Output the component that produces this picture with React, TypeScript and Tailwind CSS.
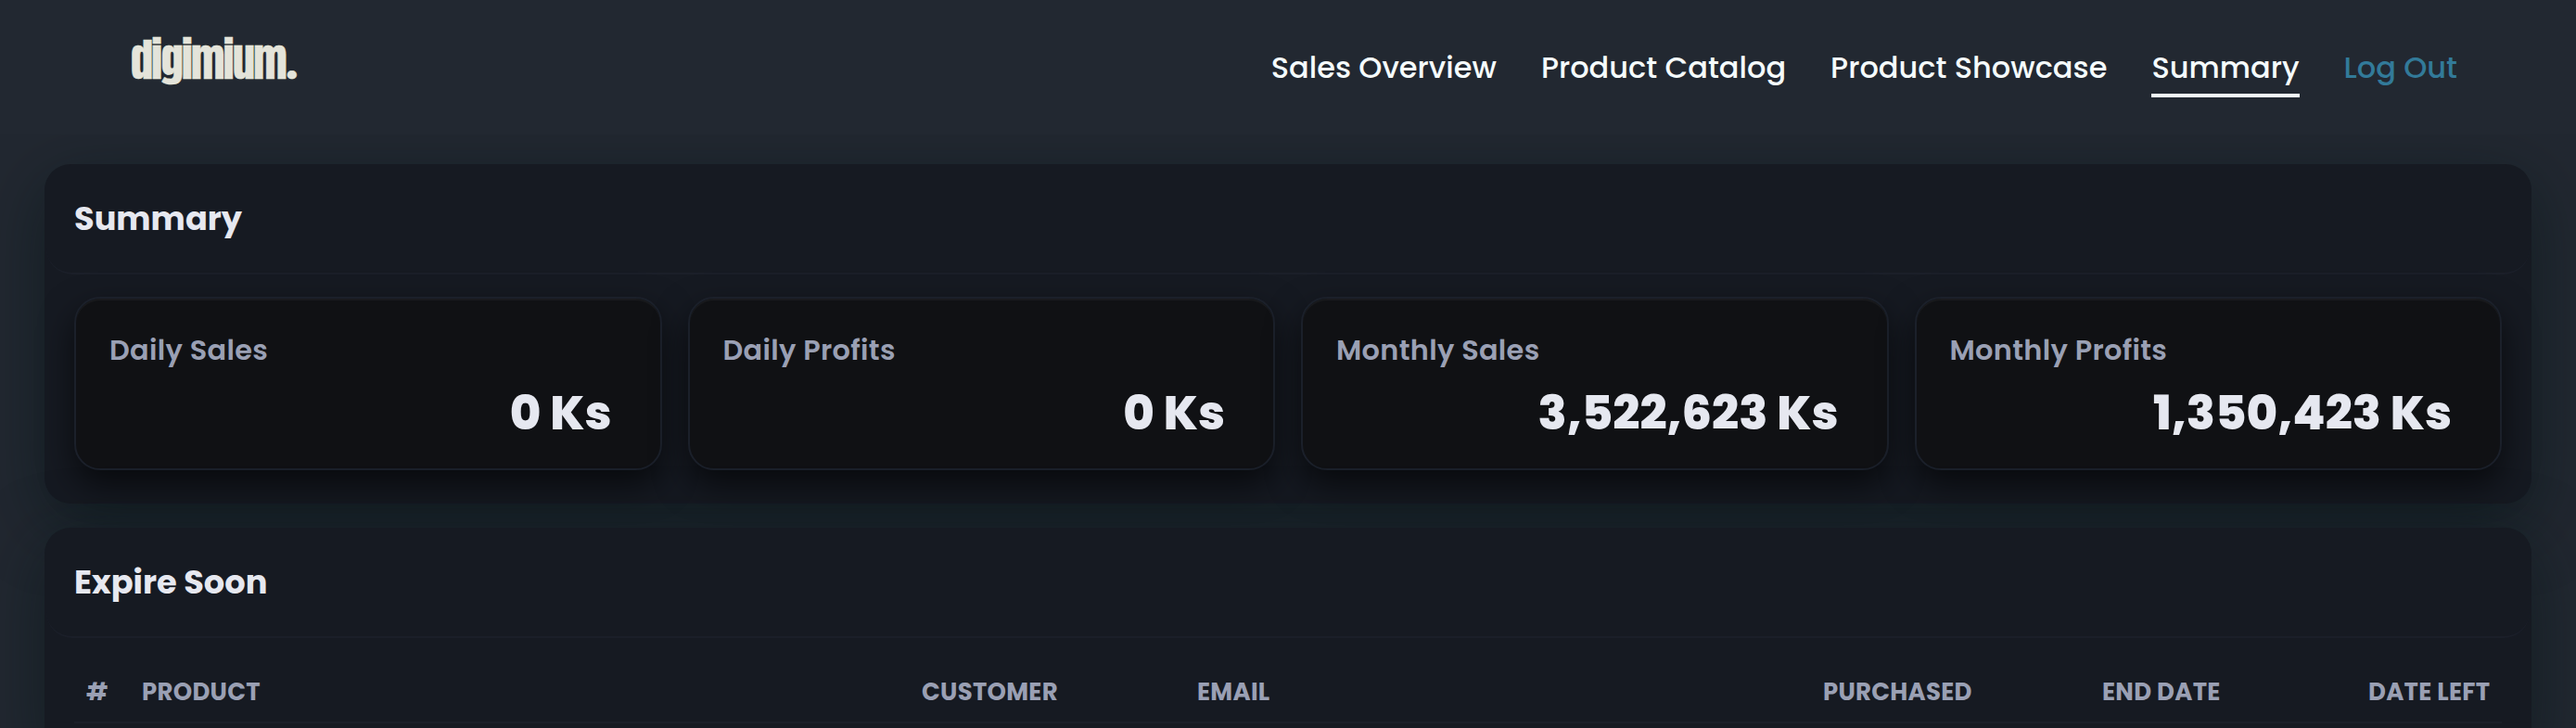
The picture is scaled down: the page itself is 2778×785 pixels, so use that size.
import type { ReactNode } from "react";

const links = ["Sales Overview", "Product Catalog", "Product Showcase", "Summary"];

const stats = [
  { label: "Daily Sales", value: "0 Ks" },
  { label: "Daily Profits", value: "0 Ks" },
  { label: "Monthly Sales", value: "3,522,623 Ks" },
  { label: "Monthly Profits", value: "1,350,423 Ks" },
];

const columns = [
  { name: "#", width: "w-[60px]" },
  { name: "Product", width: "w-[841px]" },
  { name: "Customer", width: "w-[297px]" },
  { name: "Email", width: "w-[675px]" },
  { name: "Purchased", width: "w-[301px]" },
  { name: "End Date", width: "w-[287px]" },
  { name: "Date Left", width: "w-[157px]" },
];

function Panel({ title, children }: { title: string; children: ReactNode }) {
  return (
    <section className="rounded-[28px] border-2 border-transparent bg-[#161a22] bg-clip-border shadow-[0_20px_72px_rgba(5,20,22,0.55)]">
      <header className="-mt-0.5 rounded-[28px] border-b-2 border-[#1b1f29] px-[30px] pt-8 pb-[31px]">
        <h2 className="text-[35.2px] leading-[54px] font-bold text-[#e6e8f0]">{title}</h2>
      </header>
      {children}
    </section>
  );
}

export default function App() {
  return (
    <div className="h-[785px] overflow-hidden bg-[#222831] font-['Poppins','Inter',sans-serif]">
      <header className="relative z-10 flex h-[145px] items-start justify-between bg-[#222831] pr-[128px] pl-[141px]">
        <div className="mt-[29px] flex items-baseline font-['Anton','Inter',sans-serif] text-[48px] leading-[72px] tracking-[-1.6px] text-[#e4e4da] [-webkit-text-stroke:0.5px_#e4e4da]">
          digimium<span className="font-['Poppins','Inter',sans-serif] font-bold">.</span>
        </div>
        <nav className="flex gap-12 pt-[49px] text-[32px] leading-[48px] font-medium text-[#f5fbfc]">
          {links.map((name) => (
            <a
              key={name}
              className={name === "Summary" ? "border-b-4 border-[#f5fbfc] pb-1" : "border-b-4 border-transparent pb-1"}
            >
              {name}
            </a>
          ))}
          <a className="text-[#327a99]">Log Out</a>
        </nav>
      </header>

      <main className="flex flex-col gap-[26px] px-12 pt-8">
        <Panel title="Summary">
          <div className="grid grid-cols-4 gap-7 px-[30px] pt-6 pb-[34px]">
            {stats.map((s) => (
              <div
                key={s.label}
                className="h-[187px] rounded-[28px] border-2 border-[#1b202a] bg-[#101114] pt-[33px] pr-[52px] pl-9 shadow-[0_16px_36px_rgba(0,0,0,0.6),inset_0_2px_0_rgba(255,255,255,0.04)]"
              >
                <div className="text-[30.4px] leading-[45px] font-semibold tracking-[0.3px] text-[#9aa0b4]">{s.label}</div>
                <div className="mt-[6px] text-right text-[51.2px] leading-[78px] font-extrabold text-[#e6e8f0]">
                  {s.value}
                </div>
              </div>
            ))}
          </div>
        </Panel>

        <Panel title="Expire Soon">
          <div className="px-[30px] pt-6 pb-[34px]">
            <table className="w-full table-fixed border-collapse">
              <thead>
                <tr className="border-b-2 border-[#1b1f29]">
                  {columns.map((c) => (
                    <th
                      key={c.name}
                      className={`${c.width} px-[13px] pt-[15px] pb-[12px] text-left text-[26px] leading-[39px] font-bold tracking-[0.26px] whitespace-nowrap text-[#9aa0b4] uppercase`}
                    >
                      {c.name}
                    </th>
                  ))}
                </tr>
              </thead>
            </table>
          </div>
        </Panel>
      </main>
    </div>
  );
}
